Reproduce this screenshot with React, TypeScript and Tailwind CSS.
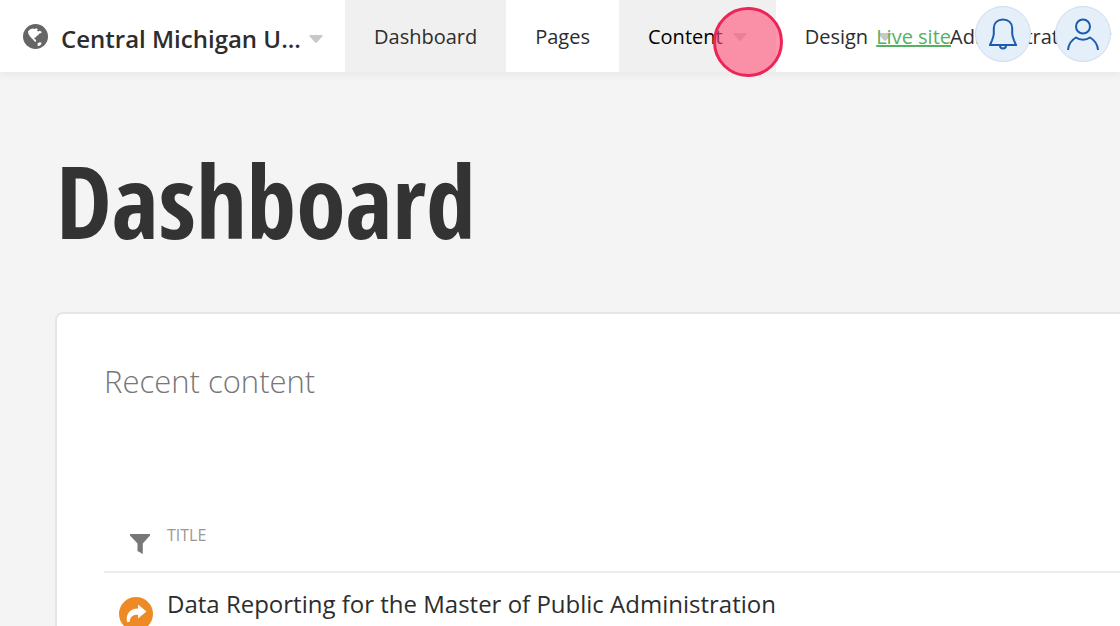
import type { ReactNode } from "react";

function Caret() {
  return (
    <svg viewBox="0 0 14 8" className="h-2 w-3.5 shrink-0 fill-[#c8c8c8]" aria-hidden="true">
      <path d="M1 0h12q1 0 .6.9L8 7.4q-1 .9-2 0L.4.9Q0 0 1 0z" />
    </svg>
  );
}

function GlobeIcon() {
  return (
    <svg viewBox="0 0 24 24" className="size-[25px] shrink-0" aria-hidden="true">
      <circle cx="12" cy="12" r="12" fill="#666" />
      <path
        fill="#fff"
        d="M4.800 7 7 5 9.500 4.200l1.700.7 1.600-.9 1.400 1-.7 1.500 1.400.8 1-.9 1.700.8.2 1.400-2 .4-1.200 1.500-1.600 1.300-1.200 1.300-1 .2.400 1.400 1.300.5v2l-1.500-.7-1.900-2.200-1.600-1.400-1.500-2.200-.8-1.200z"
      />
      <path fill="#fff" d="m13.800 18.800 2.200-1.200 1.700.2-.3 1.800-2 1.500-1.500-.2.300-1.200z" />
    </svg>
  );
}

function BellIcon() {
  return (
    <svg viewBox="0 0 28 32" className="h-8 w-7" fill="none" stroke="#1a5cad" strokeWidth="2" aria-hidden="true">
      <path d="M14 1.500C8.500 1.500 4.800 5 4.800 10v5.500c0 2.500-.9 4.500-1.800 6.800L1 27h26l-2-4.700c-.9-2.300-1.800-4.300-1.800-6.800V10c0-5-3.700-8.500-9.200-8.500z" />
      <path d="M11 27.500a3 3 0 0 0 6 0" />
    </svg>
  );
}

function UserIcon() {
  return (
    <svg viewBox="0 0 32 32" className="size-8" fill="none" stroke="#1a5cad" strokeWidth="2" aria-hidden="true">
      <circle cx="16" cy="8.500" r="7" />
      <path d="M1 32c.4-5.500 3.200-9.800 8-12.500 4 3 10 3 14 0 4.800 2.700 7.600 7 8 12.500" />
    </svg>
  );
}

function FilterIcon() {
  return (
    <svg viewBox="0 0 20 20" className="size-5 fill-[#777]" aria-hidden="true">
      <path d="M0 0h20v1.500l-7.200 8V20L7.500 17V9.500L0 1.500z" />
    </svg>
  );
}

function ShareIcon() {
  return (
    <svg viewBox="0 0 34 34" className="block size-[34px]" aria-hidden="true">
      <circle cx="17" cy="17" r="17" fill="#ee8a26" />
      <path fill="#fff" d="M19 7.500l8.500 7L19 21.500v-3.800c-5 0-7.500 1.300-8.500 7.300H8C6.500 17 11 11.500 19 11.400z" />
    </svg>
  );
}

function NavItem({ children, active, menu }: { children: ReactNode; active?: boolean; menu?: boolean }) {
  return (
    <a
      href="#"
      className={`flex shrink-0 items-center gap-2.5 px-[29px] pt-0.5 text-xl ${active ? "bg-[#f0f0f0]" : ""}`}
    >
      {children}
      {menu && <Caret />}
    </a>
  );
}

export default function App() {
  return (
    <div className="h-screen overflow-hidden bg-[#f4f4f4] font-['Open_Sans',sans-serif] text-[#2d2d2d]">
      <header className="relative flex h-18 bg-white shadow-[0_2px_8px_rgba(0,0,0,0.06)]">
        <button type="button" className="flex w-[345px] shrink-0 items-center gap-[13px] pl-[23px] text-left">
          <GlobeIcon />
          <span className="flex items-center gap-2 pt-1.5">
            <span className="text-2xl font-semibold whitespace-nowrap">Central Michigan U...</span>
            <Caret />
          </span>
        </button>
        <nav className="flex min-w-0 flex-1 overflow-hidden">
          <NavItem active>Dashboard</NavItem>
          <NavItem>Pages</NavItem>
          <NavItem active menu>
            <span className="text-black">Content</span>
          </NavItem>
          <NavItem menu>Design</NavItem>
          <NavItem menu>Administration</NavItem>
        </nav>
        <div className="absolute top-1.5 right-[9px] flex items-center gap-6">
          <a href="#" className="pt-1.5 text-xl text-[#54b15f] underline">Live site</a>
          <button type="button" aria-label="Notifications" className="flex size-14 items-center justify-center rounded-full border border-[#cbdcf0] bg-[#e5effa]">
            <BellIcon />
          </button>
          <button type="button" aria-label="Account" className="flex size-14 items-center justify-center rounded-full border border-[#cbdcf0] bg-[#e5effa]">
            <UserIcon />
          </button>
        </div>
        {/* click marker */}
        <div className="pointer-events-none absolute top-[7px] left-[713px] size-[70px] rounded-full border-3 border-[#ec2458] bg-[#ff5078]/60" />
      </header>

      <main className="pt-15 pl-14">
        <h1 className="font-['Open_Sans_Condensed','Open_Sans',sans-serif] text-[100px] leading-[136px] font-bold text-[#333]">
          Dashboard
        </h1>
        <section className="mt-11 -ml-px rounded-tl-lg border-2 border-r-0 border-[#e6e6e6] bg-white pt-12 pb-12 pl-[47px]">
          <h2 className="text-[31px] leading-[38px] font-light text-[#777]">Recent content</h2>
          <table className="mt-[122px] w-full text-left">
            <thead>
              <tr className="border-b-2 border-[#ececec]">
                <th className="w-[63px] pt-3 pb-[17px] pl-[26px]">
                  <FilterIcon />
                </th>
                <th className="pb-6 text-base font-normal text-[#999]">TITLE</th>
              </tr>
            </thead>
            <tbody>
              <tr>
                <td className="pt-6 pl-[15px]">
                  <ShareIcon />
                </td>
                <td className="pt-1 text-2xl">Data Reporting for the Master of Public Administration</td>
              </tr>
            </tbody>
          </table>
        </section>
      </main>
    </div>
  );
}
